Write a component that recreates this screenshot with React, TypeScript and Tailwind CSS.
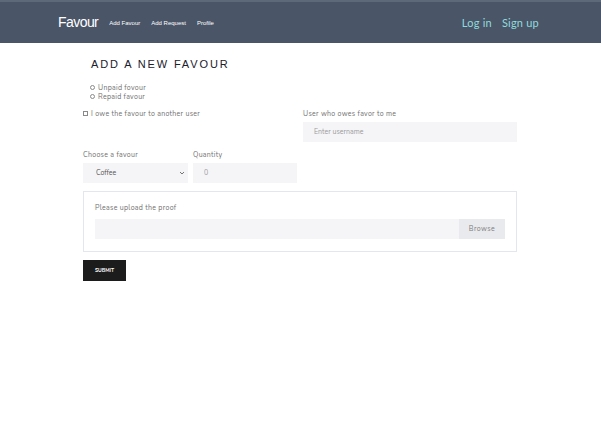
import React from "react";

const font = { fontFamily: "'Nunito', 'Lato', 'Noto Sans', sans-serif" };

function Navbar() {
  return (
    <nav className="h-[43px] w-full bg-[#4a5568] border-t-2 border-[#5d6878] flex items-center justify-between pl-[58px] pr-[62px]">
      <div className="flex items-center">
        <span className="text-white text-[14px] tracking-[-0.04em] font-['Liberation_Sans',sans-serif] mr-[11px]">Favour</span>
        <div className="flex items-center gap-[11px] text-[6px] text-white font-['Liberation_Sans',sans-serif] pt-[2px]">
          <span>Add Favour</span>
          <span>Add Request</span>
          <span>Profile</span>
        </div>
      </div>
      <div className="flex items-center gap-[10px] text-[11px] text-[#8fdcdc] font-['Lato',sans-serif] pt-[1px] tracking-[0.02em]">
        <span>Log in</span>
        <span>Sign up</span>
      </div>
    </nav>
  );
}

function Radio({ label }: { label: string }) {
  return (
    <label className="flex items-center gap-[3px] text-[7px] text-[#707070] leading-[9px] tracking-[0.04em]">
      <span className="inline-block w-[5px] h-[5px] rounded-full border border-[#8a8a8a]" />
      {label}
    </label>
  );
}

const labelCls = "text-[7px] text-[#707070] leading-[9px] tracking-[0.04em]";

export default function App() {
  return (
    <div className="w-[601px] h-[423px] bg-white overflow-hidden" style={font}>
      <Navbar />
      <div className="w-[434px] ml-[83px] pt-[14px]">
        <h1 className="ml-[8px] text-[11px] tracking-[0.17em] text-[#1a202c] font-['Liberation_Sans',sans-serif] leading-[14px]">
          ADD A NEW FAVOUR
        </h1>
        <div className="ml-[7px] mt-[12px] flex flex-col">
          <Radio label="Unpaid fovour" />
          <Radio label="Repaid favour" />
        </div>
        <div className="flex mt-[8px]">
          <label className={`w-[220px] flex items-start gap-[3px] ${labelCls}`}>
            <span className="inline-block w-[5px] h-[5px] border border-[#8a8a8a] mt-[2px]" />
            I owe the favour to another user
          </label>
          <div className="flex-1 flex flex-col">
            <span className={labelCls}>User who owes favor to me</span>
            <div className="mt-[4px] h-[20px] bg-[#f5f5f8] flex items-center pl-[11px] text-[7px] text-[#9a9a9a]">
              Enter username
            </div>
          </div>
        </div>
        <div className="flex gap-[5px] mt-[8px]">
          <div className="w-[105px] flex flex-col">
            <span className={labelCls}>Choose a favour</span>
            <div className="mt-[4px] h-[20px] bg-[#f5f5f8] flex items-center justify-between pl-[13px] pr-[3px] text-[7px] text-[#555]">
              <span>Coffee</span>
              <svg width="6" height="4" viewBox="0 0 6 4">
                <path d="M1 1l2 2 2-2" stroke="#666" strokeWidth="0.9" fill="none" />
              </svg>
            </div>
          </div>
          <div className="w-[104px] flex flex-col">
            <span className={labelCls}>Quantity</span>
            <div className="mt-[4px] h-[20px] bg-[#f5f5f8] flex items-center pl-[11px] text-[7px] text-[#a0a0a0]">
              0
            </div>
          </div>
        </div>
        <div className="mt-[8px] h-[61px] border border-[#e4e6ee] px-[11px] pt-[11px]">
          <span className={`block ${labelCls}`}>Please upload the proof</span>
          <div className="mt-[7px] h-[20px] bg-[#f5f5f8] flex justify-end">
            <div className="w-[46px] h-full bg-[#e9eaed] flex items-center justify-center text-[7px] text-[#7d7d7d] tracking-[0.06em]">
              Browse
            </div>
          </div>
        </div>
        <button className="mt-[8px] w-[43px] h-[21px] bg-[#1c1c1c] text-white text-[5px] font-bold flex items-center justify-center">
          SUBMIT
        </button>
      </div>
    </div>
  );
}
